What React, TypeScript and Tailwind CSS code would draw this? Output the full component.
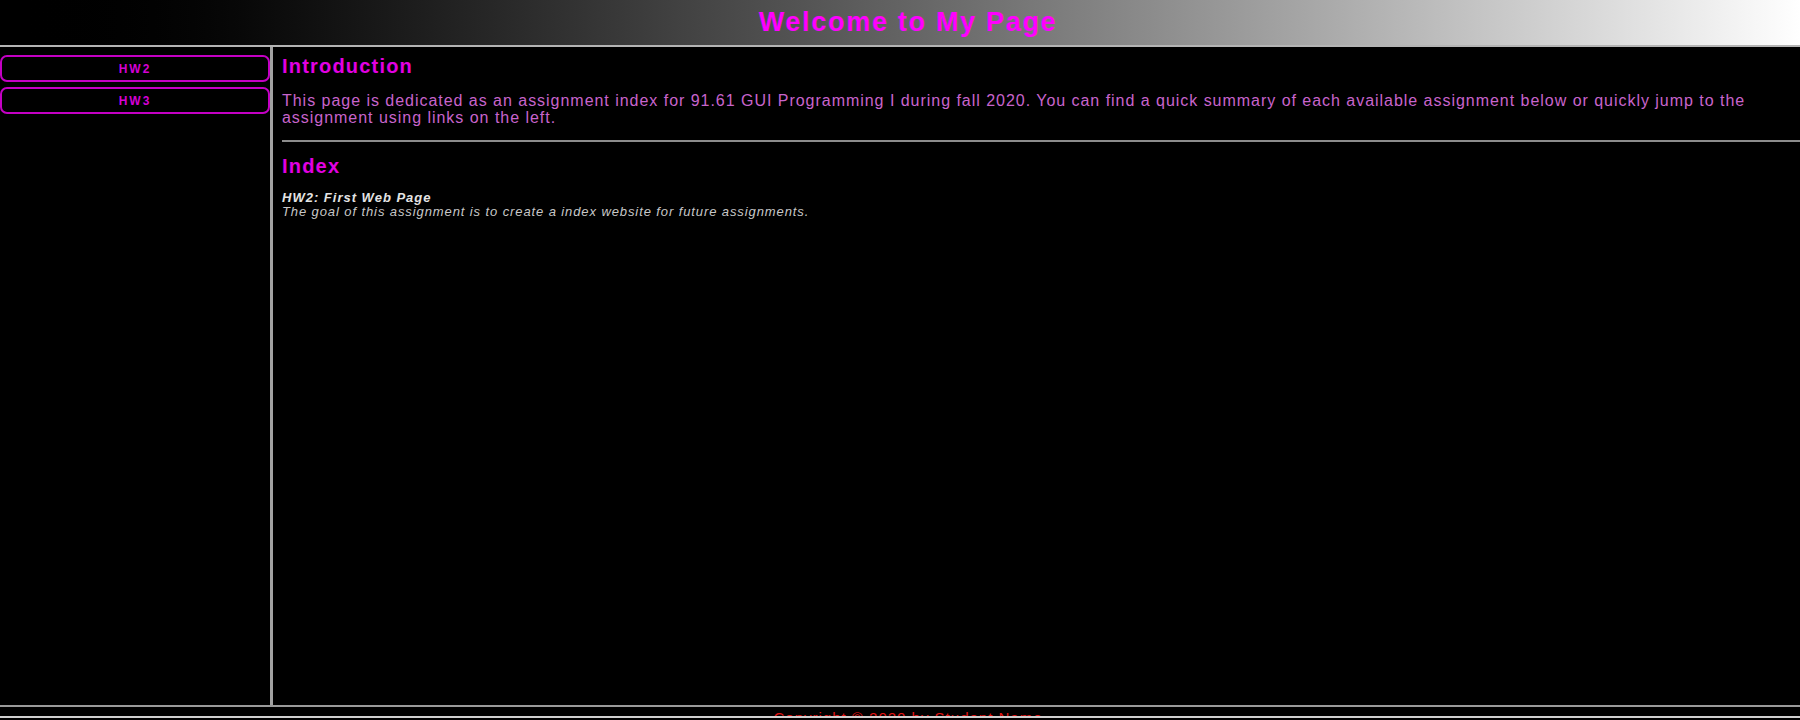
import React from "react";

const font = { fontFamily: '"Liberation Sans", Arial, sans-serif' };

function NavButton({ label }: { label: string }) {
  return (
    <a
      href="#"
      className="flex h-[27px] items-center justify-center rounded-[7px] border-2 border-[#c400c4] text-[12px] font-bold tracking-[2px] text-[#d400d4] no-underline"
    >
      {label}
    </a>
  );
}

export default function App() {
  return (
    <div className="flex h-[720px] w-full flex-col overflow-hidden bg-black" style={font}>
      <header className="flex h-[47px] shrink-0 items-start justify-center border-b-2 border-[#b4b4b4] bg-linear-to-r from-black to-white pl-[16px]">
        <h1 className="text-[27px] leading-[44px] font-bold tracking-[1.7px] text-[#ff00ff]">
          Welcome to My Page
        </h1>
      </header>

      <div className="flex h-[658px] shrink-0">
        <nav className="flex w-[273px] shrink-0 flex-col gap-[5px] border-r-[3px] border-[#a2a2a2] pt-[8px]">
          <NavButton label="HW2" />
          <NavButton label="HW3" />
        </nav>

        <main className="flex min-w-0 flex-1 flex-col pt-[7px] pl-[9px]">
          <h2 className="text-[20px] leading-[24px] font-bold tracking-[1.2px] text-[#e200e2]">
            Introduction
          </h2>
          <p className="mt-[14px] text-[16px] leading-[17px] tracking-[0.97px] text-[#c864cc]">
            This page is dedicated as an assignment index for 91.61 GUI Programming I during fall 2020. You can find a
            quick summary of each available assignment below or quickly jump to the assignment using links on the left.
          </p>
          <div className="mt-[14px] h-[2px] w-full bg-[#8c8c8c]" />
          <h2 className="mt-[12px] text-[20px] leading-[24px] font-bold tracking-[1.2px] text-[#e200e2]">Index</h2>
          <div className="mt-[13px] text-[13px] leading-[14px] italic">
            <div className="font-bold tracking-[1px] text-[#e4e4e4]">HW2: First Web Page</div>
            <div className="tracking-[0.9px] text-[#c8c8c8]">
              The goal of this assignment is to create a index website for future assignments.
            </div>
          </div>
        </main>
      </div>

      <footer className="flex h-[11px] shrink-0 justify-center overflow-hidden border-t-2 border-[#9a9a9a] pt-[3px] pl-[16px]">
        <span className="text-[15px] leading-[15px] tracking-[1px] text-[#e41414]">
          Copyright © 2020 by Student Name
        </span>
      </footer>
      <div className="h-[2px] shrink-0 bg-[#cfcfcf]" />
    </div>
  );
}
